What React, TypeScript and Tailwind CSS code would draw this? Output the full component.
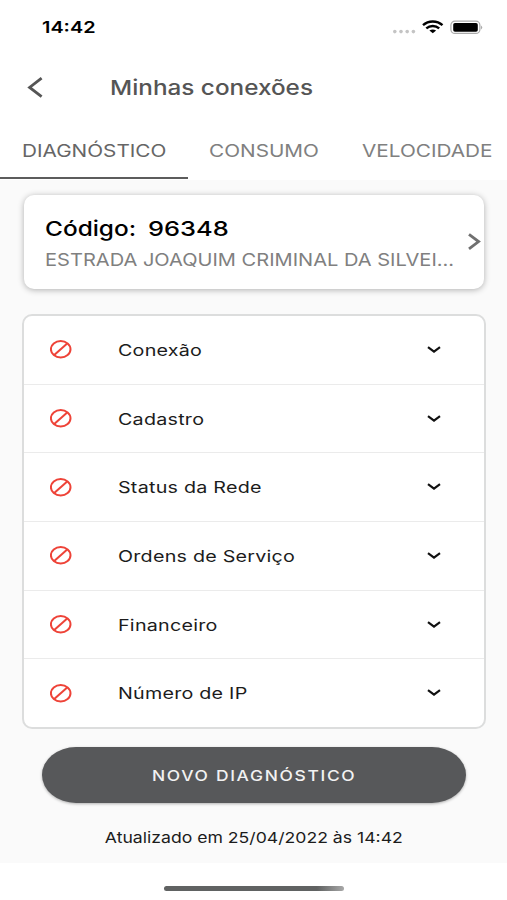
import React, { useState } from 'react';

const TABS = [
    { label: 'DIAGNÓSTICO', box: 'w-[188px] pl-[22px] text-[#666666]' },
    { label: 'CONSUMO', box: 'w-[152px] pl-[21px] text-[#808080]' },
    { label: 'VELOCIDADE', box: 'w-[167px] pl-[22px] text-[#808080]' },
];

const CHECKS = ['Conexão', 'Cadastro', 'Status da Rede', 'Ordens de Serviço', 'Financeiro', 'Número de IP'];

const BlockedIcon = () => (
    <svg width="22" height="19" viewBox="0 0 22 19" fill="none" stroke="#ee4338" strokeWidth="2">
        <ellipse cx="10.7" cy="9.2" rx="9.8" ry="8.2" />
        <path d="M4.2 15 17.2 3.4" />
    </svg>
);

const StatusBar = () => (
    <div className="flex h-[54px] items-center justify-between pl-[42px] pr-[24px]">
        <span className="origin-left scale-x-[1.24] text-[16px] font-semibold leading-5 text-black">14:42</span>
        <svg width="91" height="16" viewBox="0 0 91 16">
            <g fill="#c4c4c4">
                <circle cx="2.8" cy="12.6" r="1.8" />
                <circle cx="9" cy="12.6" r="1.8" />
                <circle cx="15.2" cy="12.6" r="1.8" />
                <circle cx="21.4" cy="12.6" r="1.8" />
            </g>
            <g fill="none" stroke="#000" strokeWidth="2.4">
                <path d="M31 6.2C36.5 1.2 45 1.2 50.5 6.2" />
                <path d="M34.3 9.4C38 6.2 43.5 6.2 47.2 9.4" />
            </g>
            <path d="M37.4 11.6Q40.8 9.3 44.1 11.6L40.8 14.2Z" fill="#000" />
            <rect x="58.9" y="2.2" width="29" height="12.2" rx="4" fill="none" stroke="#aaa" strokeWidth="1.2" />
            <rect x="61.2" y="4" width="24.6" height="8.7" rx="1.8" fill="#000" />
            <path d="M89.2 6.5v4q2-2 0-4Z" fill="#999" />
        </svg>
    </div>
);

export default function App() {
    const [activeTab, setActiveTab] = useState(0);

    return (
        <div className="flex h-[900px] w-[507px] flex-col overflow-hidden bg-white font-['Inter',sans-serif]">
            <StatusBar />

            <header className="flex h-[67px] items-center pl-[27px]">
                <svg width="16" height="22" viewBox="0 0 16 22" fill="none" stroke="#555" strokeWidth="2.8">
                    <path d="M14.6 1.1 2.6 10.4l12 9.3" />
                </svg>
                <h1 className="ml-[67px] origin-left scale-x-[1.185] whitespace-nowrap pt-[2px] text-[20.5px] font-medium text-[#555555]">
                    Minhas conexões
                </h1>
            </header>

            <nav className="flex h-[59px]">
                {TABS.map((tab, i) => (
                    <button
                        key={tab.label}
                        onClick={() => setActiveTab(i)}
                        className={`flex h-[58px] shrink-0 items-center border-b-2 pt-[6px] text-[17px] ${tab.box} ${activeTab === i ? 'border-[#5c5c5c]' : 'border-transparent'}`}
                    >
                        <span className="origin-left scale-x-[1.22]">{tab.label}</span>
                    </button>
                ))}
            </nav>

            <main className="flex h-[683px] flex-col bg-[#fafafa] pl-[22px] pr-[21px] pt-[15px]">
                <section className="ml-[2px] mr-[2px] flex h-[94px] shrink-0 items-center rounded-[10px] bg-white pl-[21px] pr-[3px] shadow-[0_1px_6px_rgba(0,0,0,0.3)]">
                    <div className="flex-1 pt-[6px]">
                        <div className="flex text-[20.5px] font-medium leading-[30px] text-black">
                            <span className="w-[103px] shrink-0"><span className="inline-block origin-left scale-x-[1.19]">Código:</span></span>
                            <span className="inline-block origin-left scale-x-[1.24]">96348</span>
                        </div>
                        <div className="w-[340px] origin-left scale-x-[1.18] whitespace-nowrap text-[17px] leading-[32px] text-[#808080]">
                            ESTRADA JOAQUIM CRIMINAL DA SILVEI...
                        </div>
                    </div>
                    <svg width="13" height="18" viewBox="0 0 13 18" fill="none" stroke="#707070" strokeWidth="2.8">
                        <path d="M1 1.4 10.6 8.6 1 15.8" />
                    </svg>
                </section>

                <section className="mt-[25px] flex h-[415px] shrink-0 flex-col rounded-[10px] border-2 border-[#dcdddd] bg-white">
                    {CHECKS.map((name) => (
                        <button
                            key={name}
                            className="flex flex-1 items-center border-b border-[#ebebeb] pl-[26px] pr-[43px] text-left last:border-b-0"
                        >
                            <BlockedIcon />
                            <span className="ml-[46px] flex-1">
                                <span className="inline-block origin-left scale-x-[1.23] text-[16px] tracking-[0.2px] text-[#1c1c1c]">{name}</span>
                            </span>
                            <svg width="14" height="8" viewBox="0 0 14 8" fill="none" stroke="#111" strokeWidth="2.2">
                                <path d="M1 1.2 7 5.7l6-4.5" />
                            </svg>
                        </button>
                    ))}
                </section>

                <button className="mx-[20px] mt-[18px] flex h-[56px] shrink-0 items-center justify-center rounded-[34px/28px] bg-[#57585a] shadow-[0_1px_3px_rgba(0,0,0,0.3)]">
                    <span className="scale-x-[1.2] pt-px text-[14.5px] font-medium tracking-[1.4px] text-[#f2f2f2]">NOVO DIAGNÓSTICO</span>
                </button>

                <p className="mt-[24px] flex justify-center text-[15px] leading-[22px] text-[#1c1c1c]">
                    <span className="scale-x-[1.175] whitespace-nowrap">Atualizado em 25/04/2022 às 14:42</span>
                </p>
            </main>

            <footer className="flex flex-1 justify-center pt-[23px]">
                <div className="h-[5px] w-[180px] rounded-full bg-linear-to-r from-[#606262] from-85% to-[#a8a8a8]" />
            </footer>
        </div>
    );
}
